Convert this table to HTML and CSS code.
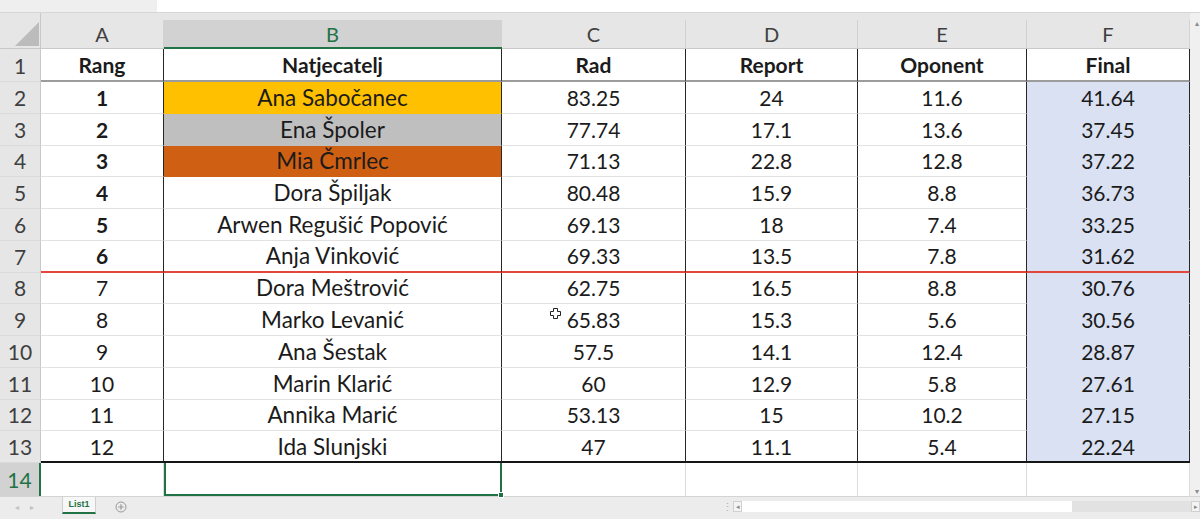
FILE: index.html
```html
<!DOCTYPE html>
<html lang="hr">
<head>
<meta charset="utf-8">
<title>List1</title>
<link rel="stylesheet" href="styles.css">
</head>
<body>
<div class="app">
  <div class="topbar"><div class="namebox"></div><div class="formula"></div></div>
  <div class="main">
    <div class="sheet">
      <div class="row hrow">
        <div class="hd corner"><svg width="41" height="36" viewBox="0 0 41 36"><polygon points="15,33 39,33 39,9" fill="#bcbcbc"/></svg></div>
        <div class="hd"><span>A</span></div>
        <div class="hd sel"><span>B</span></div>
        <div class="hd"><span>C</span></div>
        <div class="hd"><span>D</span></div>
        <div class="hd"><span>E</span></div>
        <div class="hd"><span>F</span></div>
      </div>
      <div class="row r1 bold"><div class="rh">1</div><div class="c">Rang</div><div class="c">Natjecatelj</div><div class="c">Rad</div><div class="c">Report</div><div class="c">Oponent</div><div class="c">Final</div></div>
      <div class="row"><div class="rh">2</div><div class="c b">1</div><div class="c nm gold">Ana Sabočanec</div><div class="c">83.25</div><div class="c">24</div><div class="c">11.6</div><div class="c fin">41.64</div></div>
      <div class="row"><div class="rh">3</div><div class="c b">2</div><div class="c nm silver">Ena Špoler</div><div class="c">77.74</div><div class="c">17.1</div><div class="c">13.6</div><div class="c fin">37.45</div></div>
      <div class="row"><div class="rh">4</div><div class="c b">3</div><div class="c nm bronze">Mia Čmrlec</div><div class="c">71.13</div><div class="c">22.8</div><div class="c">12.8</div><div class="c fin">37.22</div></div>
      <div class="row"><div class="rh">5</div><div class="c b">4</div><div class="c nm">Dora Špiljak</div><div class="c">80.48</div><div class="c">15.9</div><div class="c">8.8</div><div class="c fin">36.73</div></div>
      <div class="row"><div class="rh">6</div><div class="c b">5</div><div class="c nm">Arwen Regušić Popović</div><div class="c">69.13</div><div class="c">18</div><div class="c">7.4</div><div class="c fin">33.25</div></div>
      <div class="row cut"><div class="rh">7</div><div class="c b">6</div><div class="c nm">Anja Vinković</div><div class="c">69.33</div><div class="c">13.5</div><div class="c">7.8</div><div class="c fin">31.62</div></div>
      <div class="row"><div class="rh">8</div><div class="c">7</div><div class="c nm">Dora Meštrović</div><div class="c">62.75</div><div class="c">16.5</div><div class="c">8.8</div><div class="c fin">30.76</div></div>
      <div class="row"><div class="rh">9</div><div class="c">8</div><div class="c nm">Marko Levanić</div><div class="c">65.83</div><div class="c">15.3</div><div class="c">5.6</div><div class="c fin">30.56</div></div>
      <div class="row"><div class="rh">10</div><div class="c">9</div><div class="c nm">Ana Šestak</div><div class="c">57.5</div><div class="c">14.1</div><div class="c">12.4</div><div class="c fin">28.87</div></div>
      <div class="row"><div class="rh">11</div><div class="c">10</div><div class="c nm">Marin Klarić</div><div class="c">60</div><div class="c">12.9</div><div class="c">5.8</div><div class="c fin">27.61</div></div>
      <div class="row"><div class="rh">12</div><div class="c">11</div><div class="c nm">Annika Marić</div><div class="c">53.13</div><div class="c">15</div><div class="c">10.2</div><div class="c fin">27.15</div></div>
      <div class="row last"><div class="rh">13</div><div class="c">12</div><div class="c nm">Ida Slunjski</div><div class="c">47</div><div class="c">11.1</div><div class="c">5.4</div><div class="c fin">22.24</div></div>
      <div class="row empty"><div class="rh active">14</div><div class="c"></div><div class="c cur"></div><div class="c"></div><div class="c"></div><div class="c"></div><div class="c"></div></div>
      <svg class="pointer" width="11" height="11" viewBox="0 0 11 11"><path d="M3.5 0.5h4v3h3v4h-3v3h-4v-3h-3v-4h3z" fill="#fff" stroke="#222" stroke-width="1"/></svg>
    </div>
    <div class="vscroll"><span class="up">▴</span><span class="dn">▾</span></div>
  </div>
  <div class="tabs">
    <div class="nav"><span>◂</span><span>▸</span></div>
    <div class="tab">List1</div>
    <div class="add"><svg width="12" height="12" viewBox="0 0 12 12"><circle cx="6" cy="6" r="5" fill="none" stroke="#9a9a9a" stroke-width="1"/><path d="M6 3.2v5.6M3.2 6h5.6" stroke="#9a9a9a" stroke-width="1.2"/></svg></div>
    <div class="spacer"></div>
    <div class="grip">⋮</div>
    <div class="hscroll">
      <span class="arr">◂</span>
      <span class="track"></span>
      <span class="rest"></span>
      <span class="arr">▸</span>
    </div>
  </div>
</div>
</body>
</html>
```

FILE: styles.css
```css
html, body {
  margin: 0;
  padding: 0;
  background: #fff;
}
body {
  width: 1200px;
  height: 519px;
  overflow: hidden;
  font-family: Lato, "Open Sans", "Liberation Sans", sans-serif;
  color: #1b1b1b;
}
.app {
  display: flex;
  flex-direction: column;
  height: 519px;
}
.topbar {
  display: flex;
  height: 12px;
  border-bottom: 1px solid #d6d6d6;
}
.namebox {
  width: 157px;
  background: #efefef;
}
.formula {
  flex: 1;
  background: #fff;
}
.main {
  display: flex;
  height: 483px;
}
.sheet {
  position: relative;
  width: 1190px;
  display: grid;
  grid-template-columns: 41px 123px 338px 184px 172px 169px 163px;
  grid-template-rows: 36px 33px repeat(12, 31.75px) 33px;
}
.row {
  display: contents;
}
.hd {
  box-sizing: border-box;
  background: #e6e6e6;
  padding-top: 7px;
  border-bottom: 1px solid #c9c9c9;
  font-size: 20px;
  color: #3f3f3f;
  text-align: center;
}
.hd span {
  display: block;
  height: 28px;
  line-height: 29px;
  border-right: 1px solid #d2d2d2;
}
.hd.corner {
  padding: 0;
  border-right: 1px solid #c9c9c9;
}
.hd.corner svg {
  display: block;
}
.hd.sel {
  border-bottom: 2px solid #217346;
}
.hd.sel span {
  background: #d2d2d2;
  color: #217346;
  height: 27px;
}
.rh {
  box-sizing: border-box;
  background: #e6e6e6;
  border-right: 1px solid #c9c9c9;
  border-bottom: 1px solid #dadada;
  font-size: 21px;
  color: #3f3f3f;
  display: flex;
  align-items: center;
  justify-content: center;
}
.rh.active {
  background: #d2d2d2;
  color: #217346;
  border-right: 2px solid #217346;
  border-bottom: none;
}
.c {
  box-sizing: border-box;
  border-right: 1px solid #262626;
  border-bottom: 1px solid #e2e2e2;
  font-size: 21px;
  display: flex;
  align-items: center;
  justify-content: center;
  white-space: nowrap;
}
.c.nm {
  font-size: 22.5px;
}
.b,
.bold .c {
  font-weight: 700;
}
.r1 .c {
  border-bottom: 2px solid #9c9c9c;
}
.cut .c {
  border-bottom: 2px solid #e2473c;
}
.last .c {
  border-bottom: 2px solid #151515;
}
.gold {
  background: #ffc000;
  border-bottom-color: #ffc000;
}
.silver {
  background: #bfbfbf;
  border-bottom-color: #bfbfbf;
}
.bronze {
  background: #cf5f12;
  border-bottom-color: #cf5f12;
}
.fin {
  background: #d9e1f2;
  border-bottom-color: #d9e1f2;
}
.empty .c {
  border-right: 1px solid #dcdcdc;
  border-bottom: none;
}
.empty .c.cur {
  position: relative;
  border: 2px solid #217346;
  border-top: none;
}
.empty .c.cur::after {
  content: "";
  position: absolute;
  right: -4px;
  bottom: -4px;
  width: 4px;
  height: 4px;
  background: #217346;
  border: 1px solid #fff;
}
.pointer {
  position: absolute;
  left: 550px;
  top: 295px;
}
.vscroll {
  width: 10px;
  background: #f0f0f0;
  position: relative;
  font-size: 8px;
  color: #8a8a8a;
}
.vscroll .up {
  position: absolute;
  right: 1px;
  top: 5px;
}
.vscroll .dn {
  position: absolute;
  right: 1px;
  bottom: 0px;
}
.tabs {
  box-sizing: border-box;
  height: 23px;
  background: #ececec;
  border-top: 1px solid #d4d4d4;
  display: flex;
  align-items: flex-start;
}
.nav {
  width: 62px;
  display: flex;
  gap: 11px;
  padding-left: 15px;
  box-sizing: border-box;
  font-size: 8px;
  color: #c0c0c0;
  line-height: 20px;
}
.tab {
  box-sizing: border-box;
  width: 34px;
  height: 17px;
  background: #f7f7f7;
  border-left: 1px solid #cfcfcf;
  border-right: 1px solid #cfcfcf;
  border-bottom: 2px solid #217346;
  color: #217346;
  font-family: "Liberation Sans", Arial, sans-serif;
  font-weight: 700;
  font-size: 9px;
  text-align: center;
  line-height: 15px;
}
.add {
  margin-left: 19px;
  margin-top: 4px;
  width: 12px;
  height: 12px;
}
.add svg {
  display: block;
}
.spacer {
  flex: 1;
}
.grip {
  width: 11px;
  font-size: 11px;
  color: #b0b0b0;
  line-height: 20px;
}
.hscroll {
  width: 467px;
  margin-top: 4px;
  height: 11px;
  display: flex;
  background: #e2e2e2;
}
.hscroll .arr {
  width: 9px;
  height: 11px;
  box-sizing: border-box;
  border: 1px solid #d0d0d0;
  background: #f4f4f4;
  font-size: 7px;
  line-height: 9px;
  text-align: center;
  color: #888;
}
.hscroll .track {
  width: 330px;
  background: #fff;
}
.hscroll .rest {
  flex: 1;
}
```
